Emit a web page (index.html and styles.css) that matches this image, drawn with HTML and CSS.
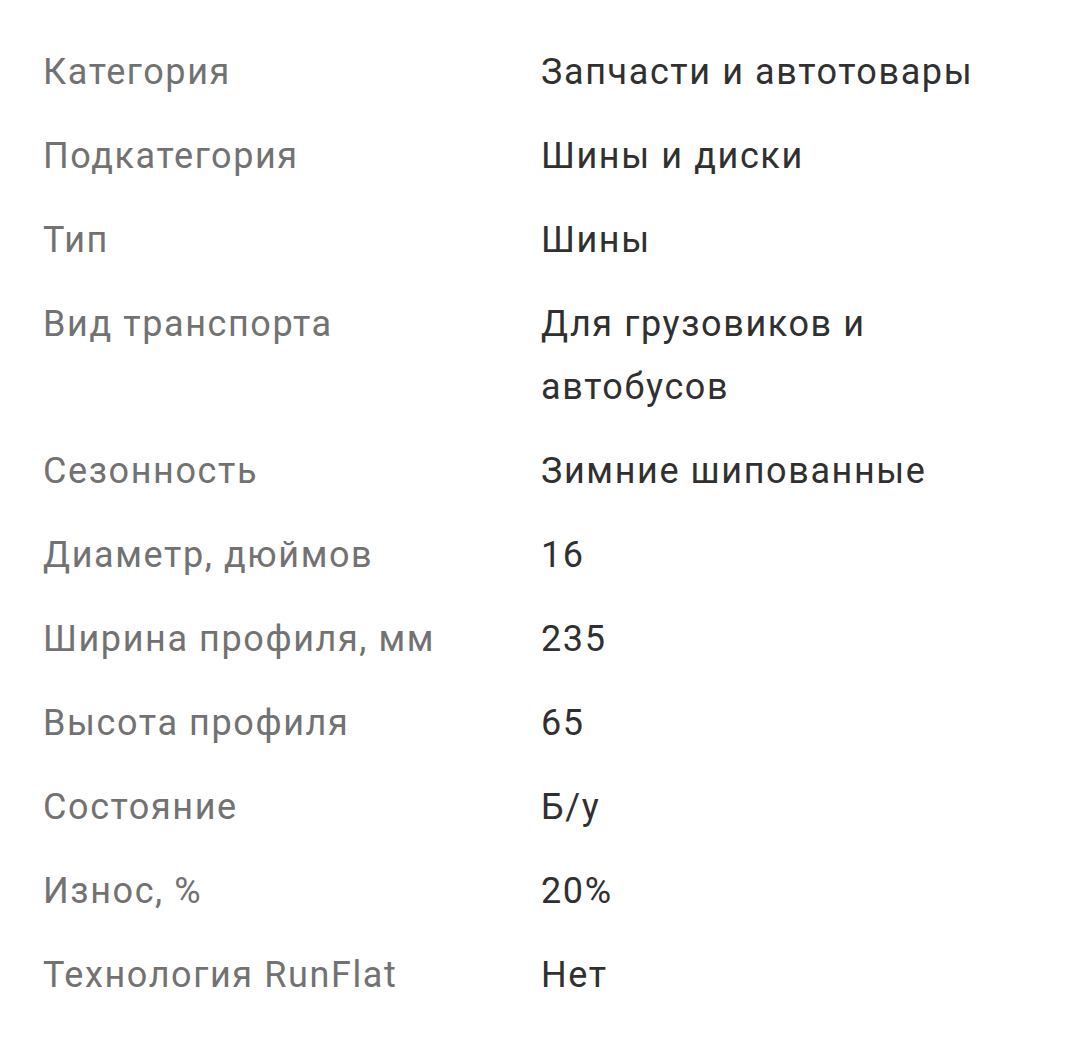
FILE: index.html
```html
<!DOCTYPE html>
<html lang="ru">
<head>
<meta charset="utf-8">
<link rel="stylesheet" href="styles.css">
</head>
<body>
<div class="specs">
  <div class="label">Категория</div><div class="value">Запчасти и автотовары</div>
  <div class="label">Подкатегория</div><div class="value">Шины и диски</div>
  <div class="label">Тип</div><div class="value">Шины</div>
  <div class="label">Вид транспорта</div><div class="value">Для грузовиков и автобусов</div>
  <div class="label">Сезонность</div><div class="value">Зимние шипованные</div>
  <div class="label">Диаметр, дюймов</div><div class="value">16</div>
  <div class="label">Ширина профиля, мм</div><div class="value">235</div>
  <div class="label">Высота профиля</div><div class="value">65</div>
  <div class="label">Состояние</div><div class="value">Б/у</div>
  <div class="label">Износ, %</div><div class="value">20%</div>
  <div class="label">Технология RunFlat</div><div class="value">Нет</div>
</div>
</body>
</html>
```
FILE: styles.css
```css
html, body {
  margin: 0;
  background: #ffffff;
}
body {
  font-family: Roboto, "Noto Sans", sans-serif;
}
.specs {
  display: grid;
  grid-template-columns: 498px 1fr;
  row-gap: 21px;
  padding: 41px 43px 0 43px;
  font-size: 36px;
  line-height: 63px;
  letter-spacing: 1.6px;
}
.label {
  color: #727272;
}
.value {
  color: #303030;
}
```
